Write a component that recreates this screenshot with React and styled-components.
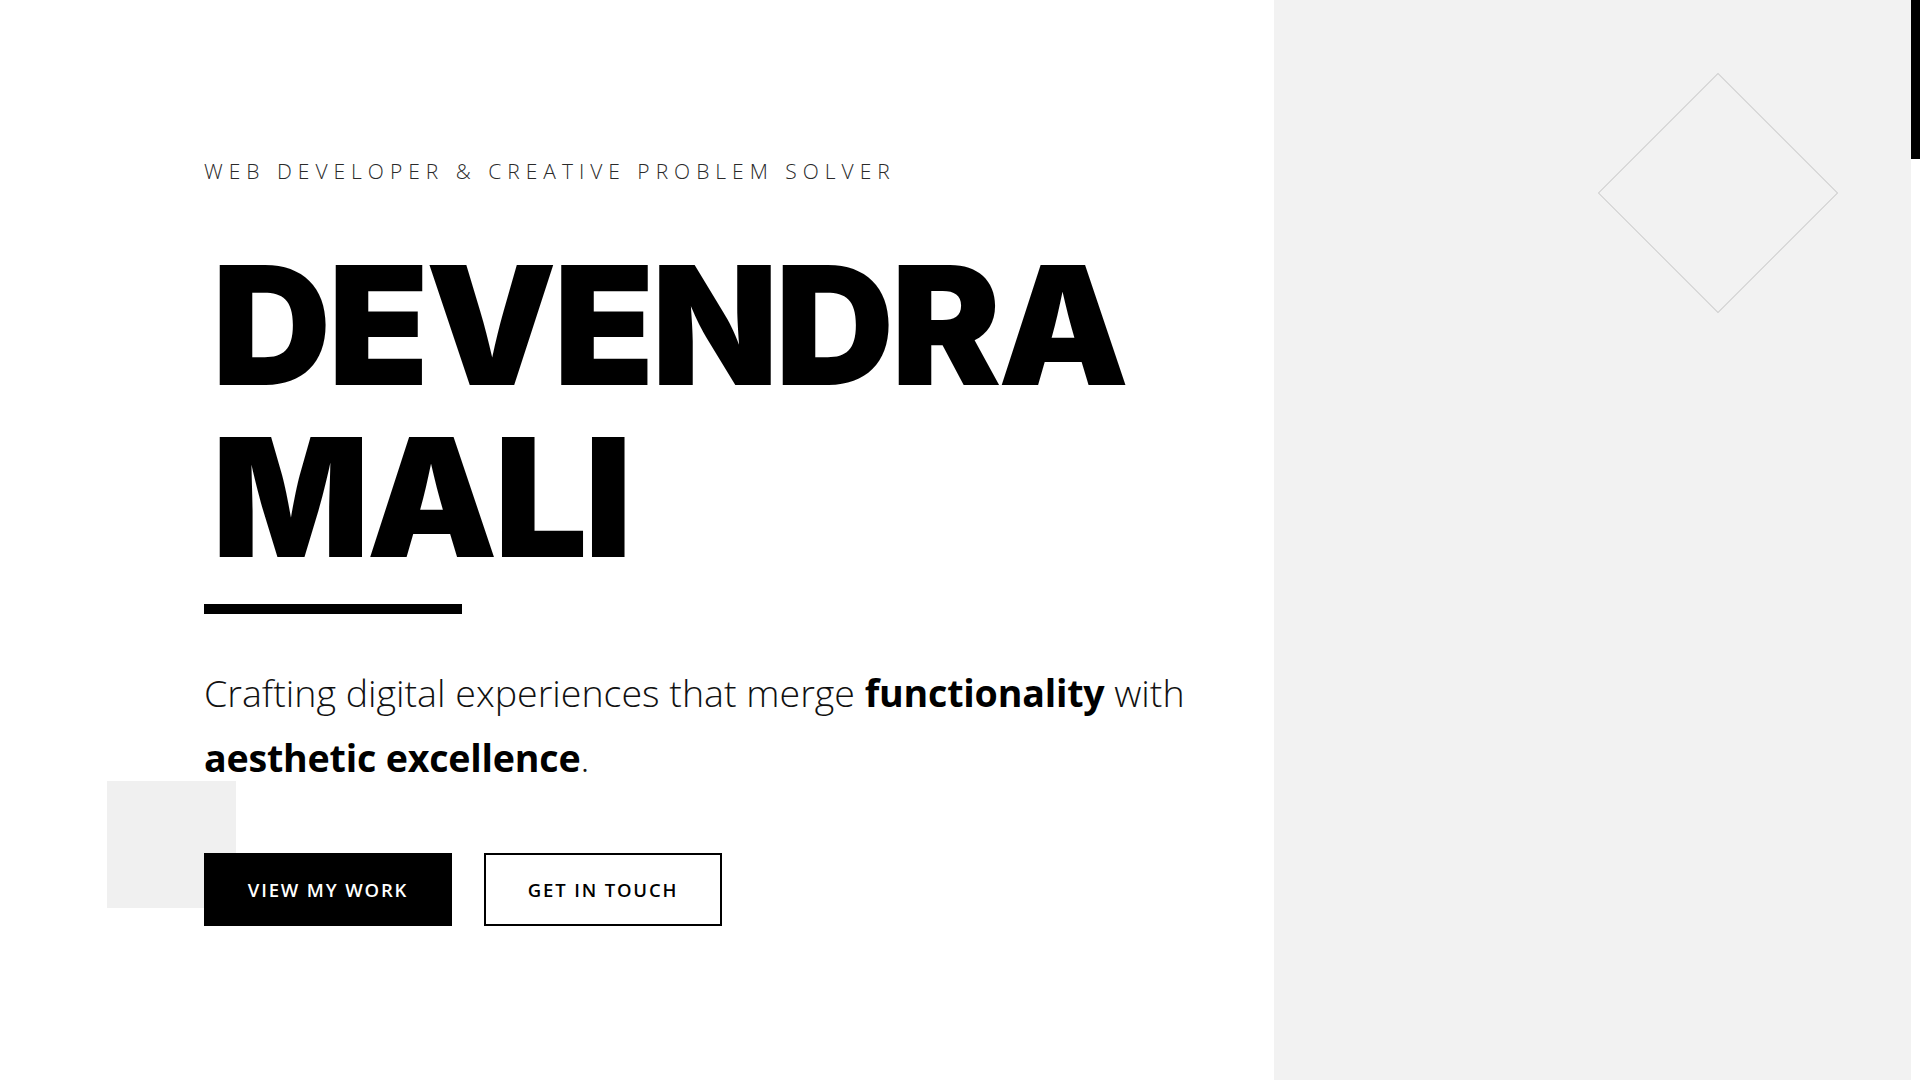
import React from 'react';
import styled, { createGlobalStyle } from 'styled-components';

const GlobalStyle = createGlobalStyle`
  html, body {
    margin: 0;
    padding: 0;
    overflow: hidden;
    background: #fff;
  }
  * {
    box-sizing: border-box;
  }
`;

const Shell = styled.div`
  display: flex;
  height: 100vh;
  width: 100vw;
`;

const Hero = styled.section`
  flex: 1;
  display: grid;
  grid-template-columns: 2fr 1fr;
  height: 100%;
`;

const IntroColumn = styled.div`
  position: relative;
  display: flex;
  flex-direction: column;
  align-items: flex-start;
  padding: 156px 0 0 204px;
  background: #fff;
`;

const Eyebrow = styled.p`
  margin: 0;
  font-family: "Open Sans", "Liberation Sans", sans-serif;
  font-weight: 300;
  font-size: 21px;
  line-height: 30px;
  letter-spacing: 6px;
  color: #2a2a2a;
  text-transform: uppercase;
`;

const Name = styled.h1`
  margin: 53px 0 0 8px;
  font-family: Inter, "Liberation Sans", sans-serif;
  font-weight: 900;
  font-size: 165px;
  line-height: 172px;
  letter-spacing: -0.02em;
  color: #000;
  text-transform: uppercase;
`;

const Rule = styled.span`
  display: block;
  width: 258px;
  height: 10px;
  margin-top: 21px;
  background: #000;
`;

const Lead = styled.p`
  margin: 46px 0 0;
  max-width: 1000px;
  font-family: "Open Sans", "Liberation Sans", sans-serif;
  font-weight: 300;
  font-size: 37.6px;
  line-height: 65px;
  color: #111;

  strong {
    font-weight: 700;
    letter-spacing: -0.2px;
    color: #000;
  }
`;

const Actions = styled.div`
  position: relative;
  display: flex;
  gap: 32px;
  margin-top: 63px;
`;

const Tile = styled.span`
  position: absolute;
  left: -97px;
  top: -72px;
  width: 129px;
  height: 127px;
  background: #f0f0f0;
`;

const Button = styled.a`
  position: relative;
  display: inline-flex;
  align-items: center;
  justify-content: center;
  height: 73px;
  width: ${(p) => p.$width}px;
  font-family: "Open Sans", "Liberation Sans", sans-serif;
  font-weight: 600;
  font-size: 18.5px;
  letter-spacing: 0.1em;
  text-transform: uppercase;
  text-decoration: none;
  cursor: pointer;
  background: ${(p) => (p.$solid ? '#000' : '#fff')};
  color: ${(p) => (p.$solid ? '#fff' : '#000')};
  border: 2px solid #000;
`;

const ArtColumn = styled.div`
  position: relative;
  background: #f2f2f2;
  overflow: hidden;
`;

const Diamond = styled.span`
  position: absolute;
  left: 444px;
  top: 193px;
  width: 170px;
  height: 170px;
  border: 1px solid #cfcfcf;
  transform: translate(-50%, -50%) rotate(45deg);
`;

const ScrollRail = styled.div`
  width: 9px;
  height: 100%;
  background: #fff;
`;

const ScrollThumb = styled.div`
  width: 100%;
  height: 159px;
  background: #000;
`;

export default function App() {
  return (
    <>
      <GlobalStyle />
      <Shell>
        <Hero>
          <IntroColumn>
            <Eyebrow>Web Developer &amp; Creative Problem Solver</Eyebrow>
            <Name>
              Devendra
              <br />
              Mali
            </Name>
            <Rule />
            <Lead>
              Crafting digital experiences that merge <strong>functionality</strong> with{' '}
              <strong>aesthetic excellence</strong>.
            </Lead>
            <Actions>
              <Tile />
              <Button $solid $width={248}>View my work</Button>
              <Button $width={238}>Get in touch</Button>
            </Actions>
          </IntroColumn>
          <ArtColumn>
            <Diamond />
          </ArtColumn>
        </Hero>
        <ScrollRail>
          <ScrollThumb />
        </ScrollRail>
      </Shell>
    </>
  );
}
